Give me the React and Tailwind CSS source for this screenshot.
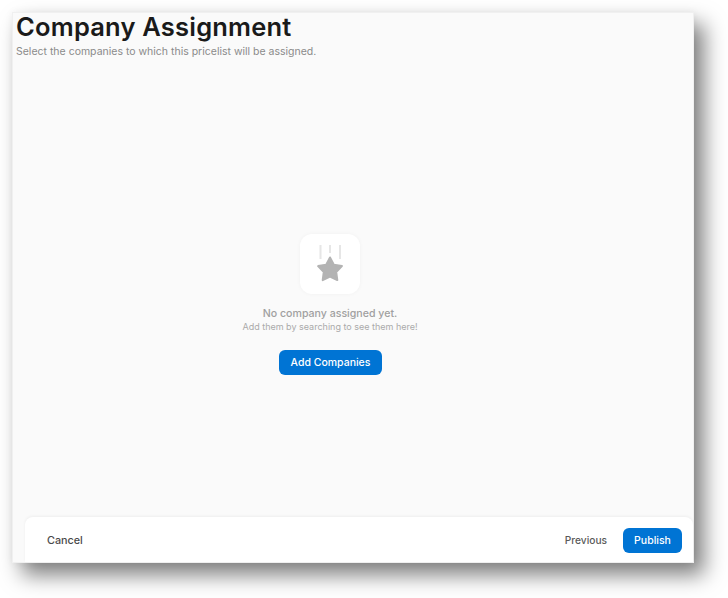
export default function App() {
  return (
    <div className="h-[598px] w-[728px] overflow-hidden bg-white pl-[12px] pt-[12px] font-['Inter','Liberation_Sans',sans-serif]">
      <div className="flex h-[551px] w-[682px] flex-col border border-[#f0f0f0] bg-[#fafafa] shadow-[10px_12px_20px_rgba(0,0,0,0.5),0_0_8px_rgba(0,0,0,0.05)]">
        {/* Header */}
        <div className="pl-[3px]">
          <h1 className="text-[25.5px] font-semibold leading-[28px] tracking-[0.2px] text-[#1a1a1a]">Company Assignment</h1>
          <p className="mt-[3px] text-[10.5px] leading-[16px] text-[#8a8a8a]">Select the companies to which this pricelist will be assigned.</p>
        </div>

        {/* Empty state */}
        <div className="flex flex-1 flex-col items-center pr-[46px] pt-[174px]">
          <div className="flex h-[60px] w-[60px] items-center justify-center rounded-[12px] bg-white shadow-[0_0_4px_rgba(0,0,0,0.04)]">
            <svg width="30" height="38" viewBox="0 0 30 38" fill="none">
              <path d="M5.5 0v14M15 0v8M25 0v14" stroke="#e6e6e6" strokeWidth="2" />
              <path
                d="M15 12.5l3.8 7.2 8.1 1.4-5.7 5.9 1.1 8.1-7.3-3.6-7.3 3.6 1.1-8.1-5.7-5.9 8.1-1.4z"
                fill="#b3b3b3"
                stroke="#b3b3b3"
                strokeWidth="2"
                strokeLinejoin="round"
              />
            </svg>
          </div>
          <p className="mt-[13px] text-[10.6px] font-medium leading-[13px] text-[#a0a0a0]">No company assigned yet.</p>
          <p className="text-[9px] leading-[14px] text-[#aaaaaa]">Add them by searching to see them here!</p>
          <button className="ml-[1px] mt-[16px] h-[25px] w-[103px] rounded-[6px] bg-[#0074d4] text-[10.5px] font-medium text-white">Add Companies</button>
        </div>

        {/* Footer */}
        <div className="ml-[12px] flex h-[45px] items-center justify-between rounded-t-[8px] bg-white pl-[22px] pr-[11px] pt-[2px] shadow-[0_-1px_3px_rgba(0,0,0,0.05)]">
          <button className="pt-[1px] text-[10.8px] font-medium text-[#4a4a4a]">Cancel</button>
          <div className="flex items-center gap-[16px]">
            <button className="text-[10.2px] font-medium text-[#5a5a5a]">Previous</button>
            <button className="h-[25px] w-[59px] rounded-[6px] bg-[#0074d4] text-[10.5px] font-medium text-white">Publish</button>
          </div>
        </div>
      </div>
    </div>
  );
}
